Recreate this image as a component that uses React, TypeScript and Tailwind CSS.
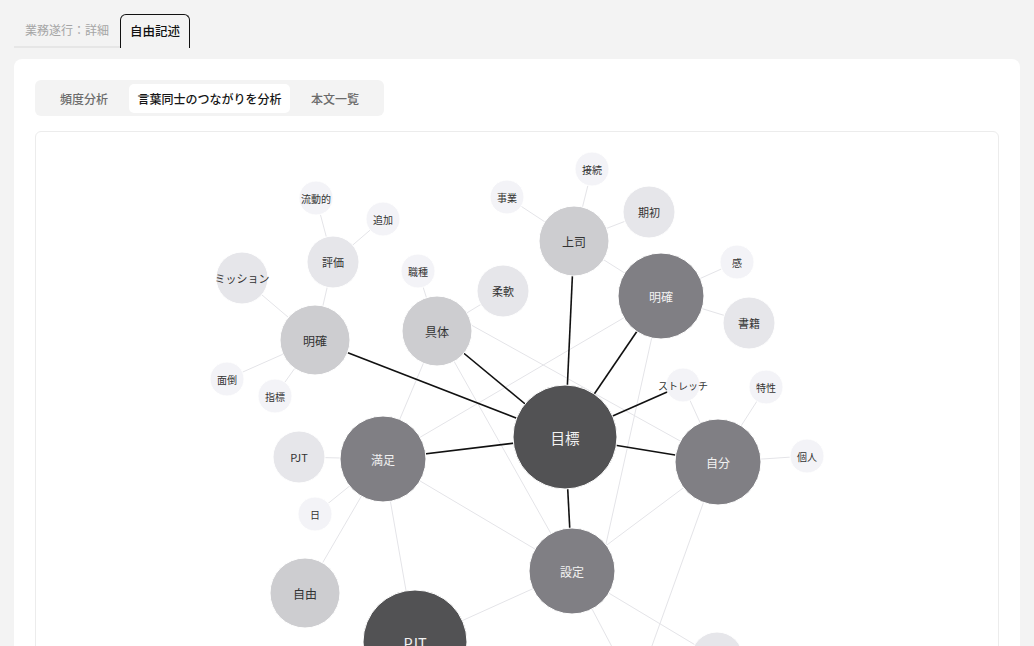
import React from "react";

type Tone = "dark" | "mid" | "soft" | "light" | "pale" | "none";

type Node = {
    x: number;
    y: number;
    r: number;
    tone: Tone;
    label: string;
};

const nodes: Record<string, Node> = {
    goal: { x: 565, y: 437, r: 52, tone: "dark", label: "目標" },
    boss: { x: 574, y: 241, r: 35, tone: "soft", label: "上司" },
    clearR: { x: 661, y: 296, r: 43, tone: "mid", label: "明確" },
    concrete: { x: 437, y: 331, r: 35, tone: "soft", label: "具体" },
    clearL: { x: 315, y: 340, r: 35, tone: "soft", label: "明確" },
    evaluation: { x: 333, y: 262, r: 26, tone: "light", label: "評価" },
    fluid: { x: 316, y: 198, r: 17, tone: "pale", label: "流動的" },
    addition: { x: 383, y: 219, r: 17, tone: "pale", label: "追加" },
    mission: { x: 242, y: 278, r: 26, tone: "light", label: "ミッション" },
    hassle: { x: 227, y: 379, r: 17, tone: "pale", label: "面倒" },
    metric: { x: 275, y: 396, r: 17, tone: "pale", label: "指標" },
    jobType: { x: 418, y: 271, r: 17, tone: "pale", label: "職種" },
    flexible: { x: 503, y: 291, r: 26, tone: "light", label: "柔軟" },
    business: { x: 507, y: 197, r: 17, tone: "pale", label: "事業" },
    connect: { x: 592, y: 169, r: 17, tone: "pale", label: "接続" },
    early: { x: 649, y: 212, r: 26, tone: "light", label: "期初" },
    feeling: { x: 737, y: 262, r: 17, tone: "pale", label: "感" },
    book: { x: 749, y: 323, r: 26, tone: "light", label: "書籍" },
    stretch: { x: 683, y: 385, r: 17, tone: "pale", label: "ストレッチ" },
    trait: { x: 766, y: 387, r: 17, tone: "pale", label: "特性" },
    self: { x: 718, y: 462, r: 43, tone: "mid", label: "自分" },
    person: { x: 807, y: 456, r: 17, tone: "pale", label: "個人" },
    satisfied: { x: 383, y: 459, r: 43, tone: "mid", label: "満足" },
    pjtSmall: { x: 299, y: 457, r: 26, tone: "light", label: "PJT" },
    day: { x: 315, y: 514, r: 17, tone: "pale", label: "日" },
    freedom: { x: 305, y: 593, r: 35, tone: "soft", label: "自由" },
    setting: { x: 572, y: 571, r: 43, tone: "mid", label: "設定" },
    pjtBig: { x: 415, y: 642, r: 52, tone: "dark", label: "PJT" },
    lower: { x: 717, y: 658, r: 26, tone: "light", label: "" },
    hiddenA: { x: 611, y: 760, r: 0, tone: "none", label: "" },
    hiddenB: { x: 640, y: 700, r: 0, tone: "none", label: "" },
    hiddenC: { x: 437, y: 306, r: 0, tone: "none", label: "" },
    hiddenD: { x: 600, y: 571, r: 0, tone: "none", label: "" },
};

const strongEdges: [string, string][] = [
    ["goal", "boss"],
    ["goal", "clearR"],
    ["goal", "stretch"],
    ["goal", "self"],
    ["goal", "setting"],
    ["goal", "satisfied"],
    ["goal", "clearL"],
    ["goal", "concrete"],
];

const weakEdges: [string, string][] = [
    ["boss", "business"],
    ["boss", "connect"],
    ["boss", "early"],
    ["boss", "clearR"],
    ["clearR", "feeling"],
    ["clearR", "book"],
    ["clearR", "hiddenD"],
    ["self", "stretch"],
    ["self", "trait"],
    ["self", "person"],
    ["self", "setting"],
    ["self", "hiddenA"],
    ["clearL", "evaluation"],
    ["evaluation", "fluid"],
    ["evaluation", "addition"],
    ["clearL", "mission"],
    ["clearL", "hassle"],
    ["clearL", "metric"],
    ["concrete", "jobType"],
    ["concrete", "flexible"],
    ["concrete", "setting"],
    ["concrete", "satisfied"],
    ["hiddenC", "self"],
    ["satisfied", "clearR"],
    ["satisfied", "pjtSmall"],
    ["satisfied", "day"],
    ["satisfied", "freedom"],
    ["satisfied", "pjtBig"],
    ["satisfied", "setting"],
    ["setting", "pjtBig"],
    ["setting", "lower"],
    ["setting", "hiddenB"],
];

const toneFill: Record<Tone, string> = {
    dark: "#525254",
    mid: "#807f84",
    soft: "#cdcdd0",
    light: "#e6e6ea",
    pale: "#f3f3f7",
    none: "transparent",
};

function labelSize(r: number) {
    if (r >= 50) return 14.5;
    if (r >= 35) return 12;
    if (r >= 26) return 11;
    return 10;
}

function Edge({ from, to, strong }: { from: string; to: string; strong?: boolean }) {
    const a = nodes[from];
    const b = nodes[to];
    return (
        <line
            x1={a.x}
            y1={a.y}
            x2={b.x}
            y2={b.y}
            stroke={strong ? "#111111" : "#e4e4e8"}
            strokeWidth={strong ? 1.6 : 1}
        />
    );
}

function WordGraph() {
    return (
        <svg width={962} height={600} viewBox="36 132 962 600" className="block">
            {weakEdges.map(([a, b]) => (
                <Edge key={`w-${a}-${b}`} from={a} to={b} />
            ))}
            {strongEdges.map(([a, b]) => (
                <Edge key={`s-${a}-${b}`} from={a} to={b} strong />
            ))}
            {Object.entries(nodes)
                .filter(([, n]) => n.tone !== "none")
                .map(([id, n]) => {
                    const onDark = n.tone === "dark" || n.tone === "mid";
                    return (
                        <g key={id}>
                            <circle cx={n.x} cy={n.y} r={n.r} fill={toneFill[n.tone]} stroke="#ffffff" strokeWidth={1} />
                            {n.label && (
                                <text
                                    x={n.x}
                                    y={n.y}
                                    textAnchor="middle"
                                    dominantBaseline="central"
                                    fontSize={labelSize(n.r)}
                                    fill={onDark ? "#f2f2f2" : "#333333"}
                                >
                                    {n.label}
                                </text>
                            )}
                        </g>
                    );
                })}
        </svg>
    );
}

export default function App() {
    return (
        <div className="min-h-screen bg-[#f3f3f3] px-[14px] pt-[14px] font-['Noto_Sans_CJK_JP','Noto_Sans',sans-serif]">
            <div className="flex items-end h-[34px]">
                <div className="h-[34px] px-[11px] flex items-center border-b-2 border-[#e6e6e6] text-[12px] text-[#a5a5a5]">
                    業務遂行：詳細
                </div>
                <div className="h-[34px] px-[9px] flex items-center border-[1.5px] border-b-0 border-[#111] rounded-t-md text-[12.5px] font-medium text-[#111]">
                    自由記述
                </div>
            </div>

            <div className="mt-[11px] bg-white rounded-lg p-[21px] pb-0">
                <div className="inline-flex h-[36px] p-[4px] pb-[3px] bg-[#f3f3f3] rounded-md text-[12px] font-medium">
                    <button className="w-[90px] flex items-center justify-center text-[#6b6b6b]">頻度分析</button>
                    <button className="w-[161px] flex items-center justify-center bg-white rounded-[5px] text-[#161616]">
                        言葉同士のつながりを分析
                    </button>
                    <button className="w-[90px] flex items-center justify-center text-[#6b6b6b]">本文一覧</button>
                </div>

                <div className="mt-[15px] border border-[#ececec] rounded-md overflow-hidden">
                    <WordGraph />
                </div>
            </div>
        </div>
    );
}
